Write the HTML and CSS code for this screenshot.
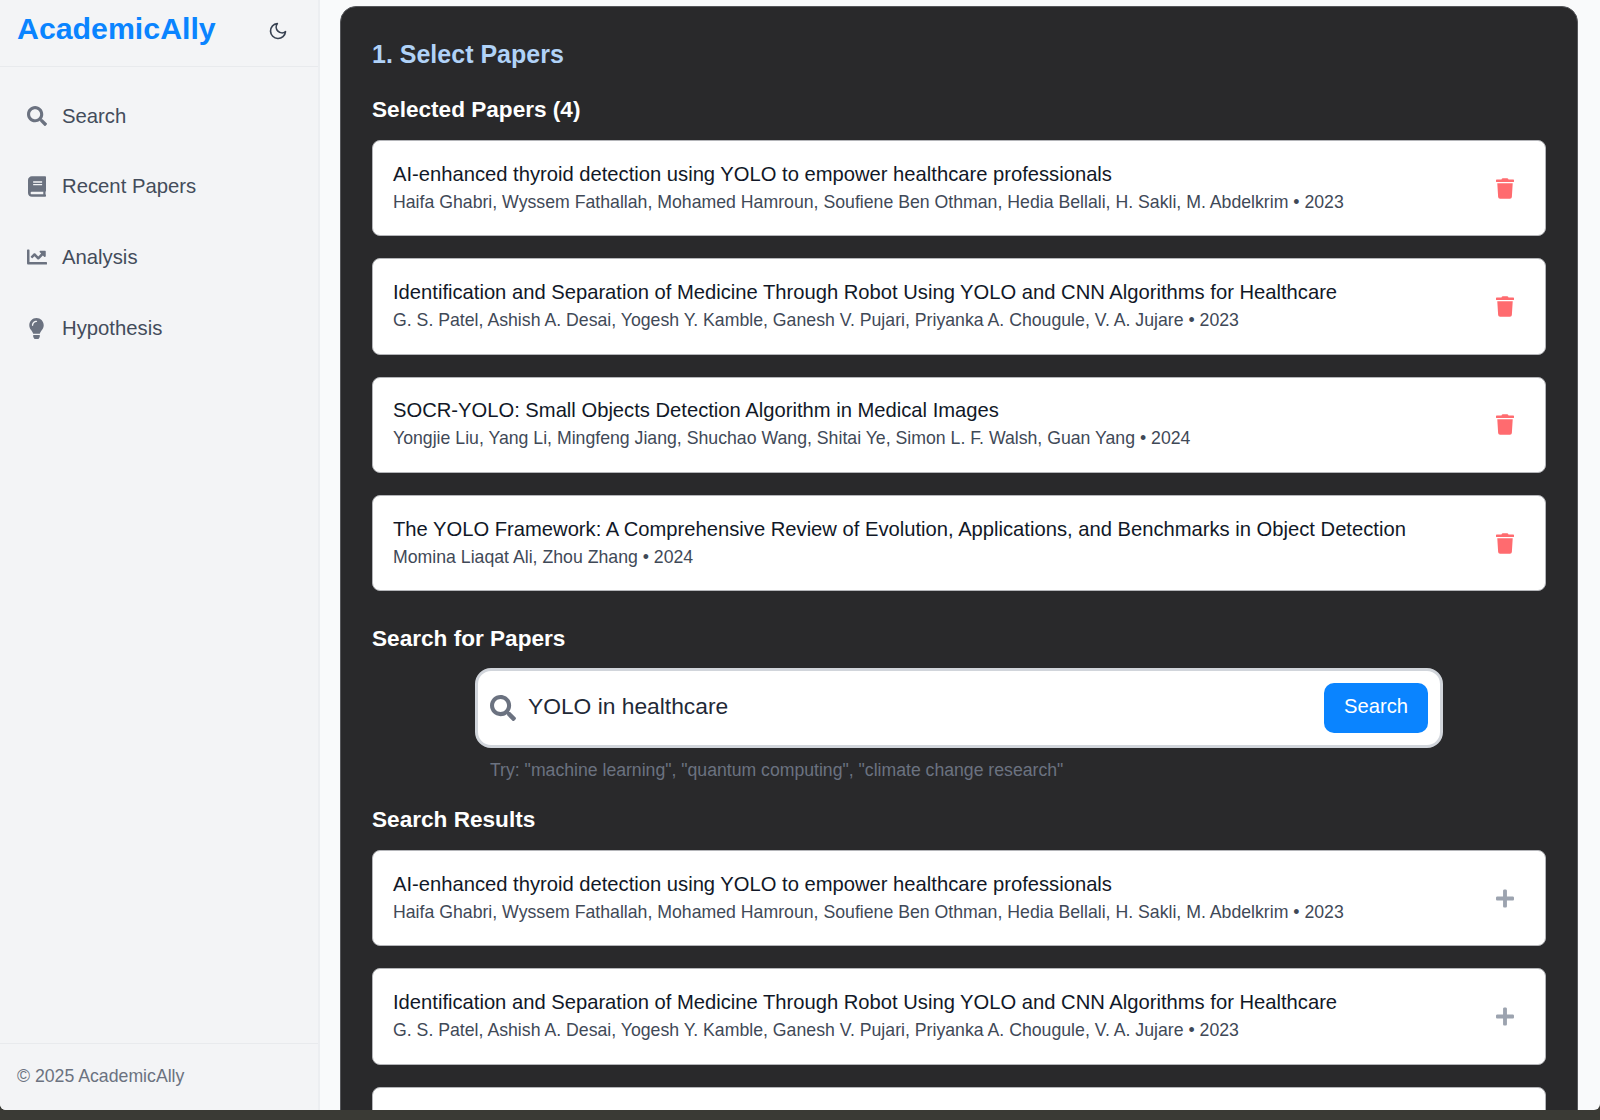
FILE: index.html
```html
<!DOCTYPE html>
<html lang="en">
<head>
<meta charset="utf-8">
<title>AcademicAlly</title>
<link rel="stylesheet" href="styles.css">
</head>
<body>
<div class="app">
  <aside class="sidebar">
    <div class="brand">
      <span class="logo">AcademicAlly</span>
      <svg class="moon" viewBox="0 0 24 24"><path d="M21 12.79A9 9 0 1 1 11.21 3 7 7 0 0 0 21 12.79z"/></svg>
    </div>
    <nav class="nav">
      <a class="nav-item"><span class="nav-icon"><svg class="i-search" viewBox="0 0 512 512"><path d="M505 442.7L405.3 343c-4.5-4.5-10.6-7-17-7H372c27.6-35.3 44-79.7 44-128C416 93.1 322.9 0 208 0S0 93.1 0 208s93.1 208 208 208c48.3 0 92.7-16.4 128-44v16.3c0 6.4 2.5 12.5 7 17l99.7 99.7c9.4 9.4 24.6 9.4 33.9 0l28.3-28.3c9.4-9.4 9.4-24.6.1-34zM208 336c-70.7 0-128-57.2-128-128 0-70.7 57.2-128 128-128 70.7 0 128 57.2 128 128 0 70.7-57.2 128-128 128z"/></svg></span>Search</a>
      <a class="nav-item"><span class="nav-icon"><svg class="i-book" viewBox="0 0 448 512"><path d="M448 360V24c0-13.3-10.7-24-24-24H96C43 0 0 43 0 96v320c0 53 43 96 96 96h328c13.3 0 24-10.7 24-24v-16c0-7.5-3.5-14.3-8.9-18.7-4.2-15.4-4.2-59.3 0-74.7 5.4-4.3 8.9-11.1 8.9-18.6zM128 134c0-3.3 2.7-6 6-6h212c3.3 0 6 2.7 6 6v20c0 3.3-2.7 6-6 6H134c-3.3 0-6-2.7-6-6v-20zm0 64c0-3.3 2.7-6 6-6h212c3.3 0 6 2.7 6 6v20c0 3.3-2.7 6-6 6H134c-3.3 0-6-2.7-6-6v-20zm253.4 250H96c-17.7 0-32-14.3-32-32 0-17.6 14.4-32 32-32h285.4c-1.9 17.1-1.9 46.9 0 64z"/></svg></span>Recent Papers</a>
      <a class="nav-item"><span class="nav-icon"><svg class="i-search" viewBox="0 0 512 512"><path d="M496 384H64V80c0-8.84-7.16-16-16-16H16C7.16 64 0 71.16 0 80v336c0 17.67 14.33 32 32 32h464c8.84 0 16-7.16 16-16v-32c0-8.84-7.16-16-16-16zM464 96H345.94c-21.38 0-32.09 25.85-16.97 40.97l32.4 32.4L288 242.75l-73.37-73.37c-12.5-12.5-32.76-12.5-45.25 0l-68.69 68.69c-6.25 6.25-6.25 16.38 0 22.63l22.62 22.62c6.25 6.25 16.38 6.25 22.63 0L192 237.25l73.37 73.37c12.5 12.5 32.76 12.5 45.25 0l96-96 32.4 32.4c15.12 15.12 40.97 4.41 40.97-16.97V112c.01-8.84-7.15-16-15.99-16z"/></svg></span>Analysis</a>
      <a class="nav-item"><span class="nav-icon"><svg class="i-bulb" viewBox="0 0 352 512"><path d="M96.06 454.35c.01 6.29 1.87 12.45 5.36 17.69l17.09 25.69a31.99 31.99 0 0 0 26.64 14.28h61.71a31.99 31.99 0 0 0 26.64-14.28l17.09-25.69a31.989 31.989 0 0 0 5.36-17.69l.04-38.35H96.01l.05 38.35zM0 176c0 44.37 16.45 84.85 43.56 115.78 16.52 18.85 42.36 58.23 52.21 91.45.04.26.07.52.11.78h160.24c.04-.26.07-.51.11-.78 9.85-33.22 35.69-72.6 52.21-91.45C335.55 260.85 352 220.37 352 176 352 78.61 272.91-.3 175.45 0 73.44.31 0 82.97 0 176zm176-80c-44.11 0-80 35.89-80 80 0 8.84-7.16 16-16 16s-16-7.16-16-16c0-61.76 50.24-112 112-112 8.84 0 16 7.16 16 16s-7.16 16-16 16z"/></svg></span>Hypothesis</a>
    </nav>
    <footer class="side-foot">© 2025 AcademicAlly</footer>
  </aside>
  <main class="main">
    <section class="panel">
      <h1 class="step">1. Select Papers</h1>
      <h2 class="sub first">Selected Papers (4)</h2>
      <div class="cards">
        <article class="card">
          <div class="card-text">
            <div class="title">AI-enhanced thyroid detection using YOLO to empower healthcare professionals</div>
            <div class="meta">Haifa Ghabri, Wyssem Fathallah, Mohamed Hamroun, Soufiene Ben Othman, Hedia Bellali, H. Sakli, M. Abdelkrim • 2023</div>
          </div>
          <svg class="trash" viewBox="0 0 448 512"><path d="M432 32H312l-9.4-18.7A24 24 0 0 0 281.1 0H166.8a23.72 23.72 0 0 0-21.4 13.3L136 32H16A16 16 0 0 0 0 48v32a16 16 0 0 0 16 16h416a16 16 0 0 0 16-16V48a16 16 0 0 0-16-16zM53.2 467a48 48 0 0 0 47.9 45h245.8a48 48 0 0 0 47.9-45L416 128H32z"/></svg>
        </article>
        <article class="card">
          <div class="card-text">
            <div class="title">Identification and Separation of Medicine Through Robot Using YOLO and CNN Algorithms for Healthcare</div>
            <div class="meta">G. S. Patel, Ashish A. Desai, Yogesh Y. Kamble, Ganesh V. Pujari, Priyanka A. Chougule, V. A. Jujare • 2023</div>
          </div>
          <svg class="trash" viewBox="0 0 448 512"><path d="M432 32H312l-9.4-18.7A24 24 0 0 0 281.1 0H166.8a23.72 23.72 0 0 0-21.4 13.3L136 32H16A16 16 0 0 0 0 48v32a16 16 0 0 0 16 16h416a16 16 0 0 0 16-16V48a16 16 0 0 0-16-16zM53.2 467a48 48 0 0 0 47.9 45h245.8a48 48 0 0 0 47.9-45L416 128H32z"/></svg>
        </article>
        <article class="card">
          <div class="card-text">
            <div class="title">SOCR-YOLO: Small Objects Detection Algorithm in Medical Images</div>
            <div class="meta">Yongjie Liu, Yang Li, Mingfeng Jiang, Shuchao Wang, Shitai Ye, Simon L. F. Walsh, Guan Yang • 2024</div>
          </div>
          <svg class="trash" viewBox="0 0 448 512"><path d="M432 32H312l-9.4-18.7A24 24 0 0 0 281.1 0H166.8a23.72 23.72 0 0 0-21.4 13.3L136 32H16A16 16 0 0 0 0 48v32a16 16 0 0 0 16 16h416a16 16 0 0 0 16-16V48a16 16 0 0 0-16-16zM53.2 467a48 48 0 0 0 47.9 45h245.8a48 48 0 0 0 47.9-45L416 128H32z"/></svg>
        </article>
        <article class="card">
          <div class="card-text">
            <div class="title">The YOLO Framework: A Comprehensive Review of Evolution, Applications, and Benchmarks in Object Detection</div>
            <div class="meta">Momina Liaqat Ali, Zhou Zhang • 2024</div>
          </div>
          <svg class="trash" viewBox="0 0 448 512"><path d="M432 32H312l-9.4-18.7A24 24 0 0 0 281.1 0H166.8a23.72 23.72 0 0 0-21.4 13.3L136 32H16A16 16 0 0 0 0 48v32a16 16 0 0 0 16 16h416a16 16 0 0 0 16-16V48a16 16 0 0 0-16-16zM53.2 467a48 48 0 0 0 47.9 45h245.8a48 48 0 0 0 47.9-45L416 128H32z"/></svg>
        </article>
      </div>
      <h2 class="sub search-head">Search for Papers</h2>
      <div class="search-wrap">
        <form class="search-box">
          <svg class="search-icon" viewBox="0 0 512 512"><path d="M505 442.7L405.3 343c-4.5-4.5-10.6-7-17-7H372c27.6-35.3 44-79.7 44-128C416 93.1 322.9 0 208 0S0 93.1 0 208s93.1 208 208 208c48.3 0 92.7-16.4 128-44v16.3c0 6.4 2.5 12.5 7 17l99.7 99.7c9.4 9.4 24.6 9.4 33.9 0l28.3-28.3c9.4-9.4 9.4-24.6.1-34zM208 336c-70.7 0-128-57.2-128-128 0-70.7 57.2-128 128-128 70.7 0 128 57.2 128 128 0 70.7-57.2 128-128 128z"/></svg>
          <input class="search-input" type="text" value="YOLO in healthcare">
          <button class="search-btn" type="button">Search</button>
        </form>
        <p class="hint">Try: "machine learning", "quantum computing", "climate change research"</p>
      </div>
      <h2 class="sub results-head">Search Results</h2>
      <div class="cards">
        <article class="card">
          <div class="card-text">
            <div class="title">AI-enhanced thyroid detection using YOLO to empower healthcare professionals</div>
            <div class="meta">Haifa Ghabri, Wyssem Fathallah, Mohamed Hamroun, Soufiene Ben Othman, Hedia Bellali, H. Sakli, M. Abdelkrim • 2023</div>
          </div>
          <svg class="plus" viewBox="0 0 448 512"><path d="M416 208H272V64c0-17.67-14.33-32-32-32h-32c-17.67 0-32 14.33-32 32v144H32c-17.67 0-32 14.33-32 32v32c0 17.67 14.33 32 32 32h144v144c0 17.67 14.33 32 32 32h32c17.67 0 32-14.33 32-32V304h144c17.67 0 32-14.33 32-32v-32c0-17.67-14.33-32-32-32z"/></svg>
        </article>
        <article class="card">
          <div class="card-text">
            <div class="title">Identification and Separation of Medicine Through Robot Using YOLO and CNN Algorithms for Healthcare</div>
            <div class="meta">G. S. Patel, Ashish A. Desai, Yogesh Y. Kamble, Ganesh V. Pujari, Priyanka A. Chougule, V. A. Jujare • 2023</div>
          </div>
          <svg class="plus" viewBox="0 0 448 512"><path d="M416 208H272V64c0-17.67-14.33-32-32-32h-32c-17.67 0-32 14.33-32 32v144H32c-17.67 0-32 14.33-32 32v32c0 17.67 14.33 32 32 32h144v144c0 17.67 14.33 32 32 32h32c17.67 0 32-14.33 32-32V304h144c17.67 0 32-14.33 32-32v-32c0-17.67-14.33-32-32-32z"/></svg>
        </article>
        <article class="card"></article>
      </div>
    </section>
  </main>
</div>
</body>
</html>
```
FILE: styles.css
```css
* { box-sizing: border-box; }
html, body { margin: 0; height: 100%; }
body {
  background: #3a3a35;
  font-family: "Liberation Sans", Arial, sans-serif;
  overflow: hidden;
}
.app {
  display: flex;
  height: 1110px;
  overflow: hidden;
  background: #f9fafb;
  border-radius: 0 0 6px 6px;
}
.sidebar {
  width: 320px;
  flex: none;
  display: flex;
  flex-direction: column;
  background: #f3f4f6;
  border-right: 2px solid #eceef1;
}
.brand {
  height: 67px;
  flex: none;
  display: flex;
  align-items: center;
  justify-content: space-between;
  padding: 0 30px 8px 17px;
  border-bottom: 1px solid #e8eaed;
}
.logo { color: #0a84ff; font-size: 30.3px; font-weight: 700; }
.moon {
  width: 20px;
  height: 20px;
  margin-top: 4px;
  fill: none;
  stroke: #374151;
  stroke-width: 2;
  stroke-linecap: round;
  stroke-linejoin: round;
}
.nav { flex: 1; display: flex; flex-direction: column; padding-top: 14px; }
.nav-item {
  height: 70.6px;
  display: flex;
  align-items: center;
  padding-left: 27px;
  color: #434c5b;
  font-size: 20.3px;
}
.nav-icon { width: 35px; display: flex; fill: #6b7280; }
.i-search { width: 20px; height: 20px; }
.i-book { width: 18px; height: 21px; margin-left: 1px; }
.i-bulb { width: 15px; height: 21px; margin-left: 2px; }
.side-foot {
  height: 67px;
  flex: none;
  display: flex;
  align-items: center;
  padding: 0 0 2px 17px;
  color: #6b7280;
  font-size: 17.7px;
  border-top: 1px solid #e8eaed;
}
.main { flex: 1; min-width: 0; padding: 6px 22px 0 20px; }
.panel {
  background: #29292b;
  border: 1px solid #55565a;
  border-radius: 16px;
  padding: 31px 31px;
}
.step { margin: 0; color: #b0d2f7; font-size: 25px; font-weight: 700; line-height: 32px; }
.sub { margin: 0; color: #fff; font-size: 22.6px; font-weight: 700; line-height: 28px; }
.sub.first { margin-top: 26px; margin-bottom: 16px; }
.search-head { margin-top: 33.8px; margin-bottom: 15px; }
.results-head { margin-top: 24px; margin-bottom: 16px; }
.cards { display: flex; flex-direction: column; gap: 22px; }
.card {
  height: 96.3px;
  display: flex;
  align-items: center;
  justify-content: space-between;
  padding: 0 31px 0 20px;
  background: #fff;
  border: 1px solid #b4b5b9;
  border-radius: 8px;
}
.title { color: #111827; font-size: 20.2px; line-height: 28px; }
.meta { color: #3f4957; font-size: 17.7px; line-height: 29px; }
.trash { width: 18px; height: 21px; flex: none; fill: #ff6b6f; }
.plus { width: 18px; height: 21px; flex: none; fill: #9ca3af; }
.search-wrap { width: 968px; margin: 0 auto; }
.search-box {
  height: 80px;
  display: flex;
  align-items: center;
  padding: 0 12px;
  background: #fff;
  border: 3px solid #d1d5db;
  border-radius: 16px;
}
.search-icon { width: 26px; height: 26px; flex: none; fill: #6b7280; }
.search-input {
  flex: 1;
  min-width: 0;
  height: 50px;
  padding: 0 12px 2px;
  border: 0;
  outline: 0;
  background: transparent;
  color: #1f2937;
  font: 22.8px "Liberation Sans", Arial, sans-serif;
}
.search-btn {
  width: 104px;
  height: 50px;
  padding: 0 0 2px;
  border: 0;
  border-radius: 10px;
  background: #0a84ff;
  color: #fff;
  font: 20.2px "Liberation Sans", Arial, sans-serif;
}
.hint { margin: 10px 0 0 15px; color: #6b7280; font-size: 17.65px; line-height: 24px; }
```
